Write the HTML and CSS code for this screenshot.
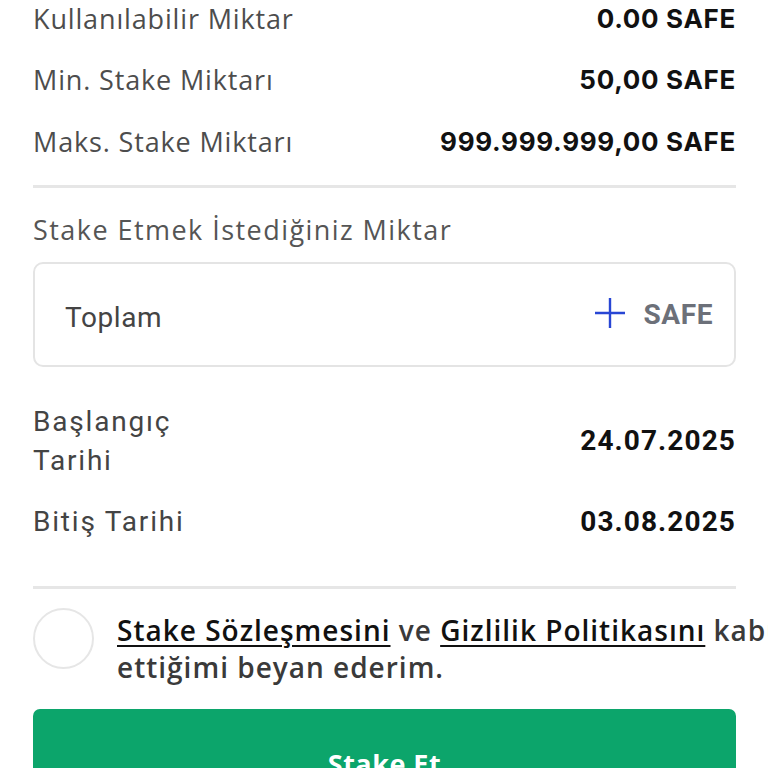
FILE: index.html
```html
<!DOCTYPE html>
<html lang="tr">
<head>
<meta charset="utf-8">
<link rel="stylesheet" href="styles.css">
</head>
<body>
<main class="page">
  <section class="info">
    <div class="row"><span class="label">Kullanılabilir Miktar</span><span class="value">0.00 SAFE</span></div>
    <div class="row"><span class="label">Min. Stake Miktarı</span><span class="value">50,00 SAFE</span></div>
    <div class="row"><span class="label">Maks. Stake Miktarı</span><span class="value">999.999.999,00 SAFE</span></div>
  </section>
  <hr class="divider">
  <div class="field-label">Stake Etmek İstediğiniz Miktar</div>
  <div class="amount-box">
    <span class="placeholder">Toplam</span>
    <span class="suffix">
      <svg class="plus" width="32" height="32" viewBox="0 0 32 32"><path d="M16 1V31M1 16H31" stroke="#2846d4" stroke-width="2.4" fill="none"/></svg>
      <span class="unit">SAFE</span>
    </span>
  </div>
  <section class="dates">
    <div class="date-row"><span class="date-label">Başlangıç Tarihi</span><span class="date-value">24.07.2025</span></div>
    <div class="date-row"><span class="date-label">Bitiş Tarihi</span><span class="date-value">03.08.2025</span></div>
  </section>
  <hr class="divider divider-2">
  <div class="agree">
    <span class="radio"></span>
    <p class="agree-text"><a class="link">Stake Sözleşmesini</a> ve <a class="link">Gizlilik Politikasını</a> kabul ettiğimi beyan ederim.</p>
  </div>
  <button class="submit">Stake Et</button>
</main>
</body>
</html>
```
FILE: styles.css
```css
html, body {
  margin: 0;
  padding: 0;
  background: #ffffff;
  overflow: hidden;
  height: 768px;
}
.page {
  width: 703px;
  margin-left: 33px;
  font-family: "Open Sans", sans-serif;
  color: #4a4a4a;
}
.info {
  display: flex;
  flex-direction: column;
  gap: 25.5px;
}
.row {
  display: flex;
  justify-content: space-between;
  align-items: center;
  height: 36px;
}
.label {
  font-size: 27px;
  letter-spacing: 0.85px;
  color: #4d4d4d;
}
.value {
  font-family: Inter, sans-serif;
  font-weight: 700;
  font-size: 26px;
  letter-spacing: 0.7px;
  color: #111;
}
.divider {
  border: 0;
  height: 3px;
  background: #e6e6e6;
  margin: 26px 0 0;
}
.field-label {
  margin-top: 24px;
  line-height: 36px;
  font-size: 27px;
  letter-spacing: 1.45px;
  color: #555;
}
.amount-box {
  margin-top: 14px;
  height: 101px;
  border: 2px solid #e4e4e4;
  border-radius: 10px;
  display: flex;
  align-items: center;
  justify-content: space-between;
  padding: 0 21px 0 30px;
}
.placeholder {
  font-family: Roboto, sans-serif;
  font-size: 28px;
  letter-spacing: 0.6px;
  color: #444;
  margin-top: 6px;
}
.suffix {
  display: flex;
  align-items: center;
  gap: 17px;
}
.plus { display: block; margin-top: -4px; }
.unit {
  font-family: Roboto, sans-serif;
  font-weight: 700;
  font-size: 28px;
  letter-spacing: 0.6px;
  color: #6c7079;
}
.dates {
  margin-top: 34.5px;
  display: flex;
  flex-direction: column;
  gap: 22px;
}
.date-row {
  display: flex;
  justify-content: space-between;
  align-items: center;
}
.date-label {
  font-family: Roboto, sans-serif;
  font-size: 28px;
  line-height: 39px;
  letter-spacing: 1.8px;
  color: #444;
  max-width: 200px;
}
.date-value {
  font-family: Roboto, sans-serif;
  font-weight: 700;
  font-size: 28px;
  letter-spacing: 1.1px;
  color: #111;
}
.divider-2 {
  margin-top: 45.5px;
}
.agree {
  margin-top: 19px;
  display: flex;
  align-items: flex-start;
  gap: 23px;
}
.radio {
  flex: 0 0 auto;
  width: 57px;
  height: 57px;
  border: 2.5px solid #e6e6e6;
  border-radius: 50%;
}
.agree-text {
  flex: 0 0 700px;
  margin: 4px 0 0;
  font-size: 28px;
  font-weight: 600;
  line-height: 37px;
  letter-spacing: 1px;
  color: #3a3a3a;
}
.link {
  color: #111;
  text-decoration: underline;
  text-underline-offset: 4px;
  text-decoration-thickness: 2px;
}
.submit {
  display: block;
  margin-top: 23px;
  width: 703px;
  height: 110px;
  border: 0;
  border-radius: 7px;
  background: #0ca56b;
  color: #fff;
  font-family: "Open Sans", sans-serif;
  font-weight: 700;
  font-size: 27px;
  letter-spacing: 0.5px;
  padding: 0;
  padding-bottom: 2px;
}
```
